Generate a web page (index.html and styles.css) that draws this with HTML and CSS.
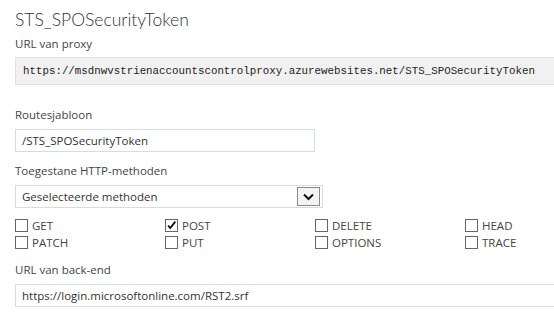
FILE: index.html
```html
<!DOCTYPE html>
<html lang="nl">
<head>
    <meta charset="UTF-8">
    <title>STS_SPOSecurityToken</title>
    <link rel="stylesheet" href="styles.css">
</head>
<body>

<div class="panel">
    <h1 class="title">STS_SPOSecurityToken</h1>

    <div class="field">
        <label class="label">URL van proxy</label>
        <div class="readonly">https://msdnwvstrienaccountscontrolproxy.azurewebsites.net/STS_SPOSecurityToken</div>
    </div>

    <div class="field field-gap">
        <label class="label">Routesjabloon</label>
        <div class="input short">/STS_SPOSecurityToken</div>
    </div>

    <div class="field">
        <label class="label">Toegestane HTTP-methoden</label>
        <div class="select">
            <span>Geselecteerde methoden</span>
            <span class="select-arrow">
                <svg width="11" height="8" viewBox="0 0 11 8"><path d="M1 1.5 L5.5 6 L10 1.5" fill="none" stroke="#111" stroke-width="2"/></svg>
            </span>
        </div>
    </div>

    <div class="methods">
        <div class="method"><span class="box"></span>GET</div>
        <div class="method"><span class="box checked"><svg width="13" height="13" viewBox="0 0 13 13"><path d="M2.5 6.5 L5 9.5 L11 2" fill="none" stroke="#111" stroke-width="2.2"/></svg></span>POST</div>
        <div class="method"><span class="box"></span>DELETE</div>
        <div class="method"><span class="box"></span>HEAD</div>
        <div class="method"><span class="box"></span>PATCH</div>
        <div class="method"><span class="box"></span>PUT</div>
        <div class="method"><span class="box"></span>OPTIONS</div>
        <div class="method"><span class="box"></span>TRACE</div>
    </div>

    <div class="field">
        <label class="label">URL van back-end</label>
        <div class="input wide">https://login.microsoftonline.com/RST2.srf</div>
    </div>
</div>

</body>
</html>
```

FILE: styles.css
```css
body {
    margin: 0;
    padding: 0;
    background-color: #ffffff;
    font-family: 'Open Sans', sans-serif;
    color: #444;
    overflow: hidden;
}

.panel {
    padding: 6px 0 0 15px;
}

.title {
    margin: 0;
    font-family: 'Lato', sans-serif;
    font-size: 17.5px;
    font-weight: 300;
    color: #333;
    line-height: 28px;
}

.field {
    margin-bottom: 9px;
}

.field-gap {
    margin-top: 20px;
}

.label {
    display: block;
    font-size: 11.5px;
    line-height: 20px;
    color: #444;
}

.readonly {
    margin-top: 3px;
    width: 600px;
    height: 26px;
    line-height: 26px;
    padding-left: 7px;
    background-color: #f1f1f1;
    border: 1px solid #dfe3e5;
    font-family: 'Liberation Mono', monospace;
    font-size: 10.8px;
    color: #222;
    white-space: nowrap;
}

.input {
    margin-top: 4px;
    height: 21px;
    line-height: 21px;
    padding-left: 6px;
    border: 1px solid #d6dde1;
    font-size: 11.5px;
    color: #333;
    white-space: nowrap;
}

.short {
    width: 292px;
}

.wide {
    width: 600px;
}

.select {
    margin-top: 4px;
    width: 300px;
    height: 21px;
    padding-left: 6px;
    border: 1px solid #d6dde1;
    display: flex;
    align-items: center;
    justify-content: space-between;
    font-size: 11.5px;
    color: #333;
}

.select-arrow {
    width: 21px;
    height: 17px;
    margin-right: 2px;
    border: 1px solid #8a8a8a;
    background-color: #f4f4f4;
    display: flex;
    align-items: center;
    justify-content: center;
}

.methods {
    display: grid;
    grid-template-columns: repeat(4, 150px);
    row-gap: 4px;
    margin-top: 11px;
    margin-bottom: 11px;
}

.method {
    display: flex;
    align-items: center;
    font-size: 11.5px;
    line-height: 13px;
    color: #444;
}

.box {
    width: 13px;
    height: 13px;
    border: 1px solid #666;
    background-color: #fff;
    margin-right: 4px;
    box-sizing: border-box;
    display: flex;
    align-items: center;
    justify-content: center;
}

.box.checked svg {
    display: block;
}
```
